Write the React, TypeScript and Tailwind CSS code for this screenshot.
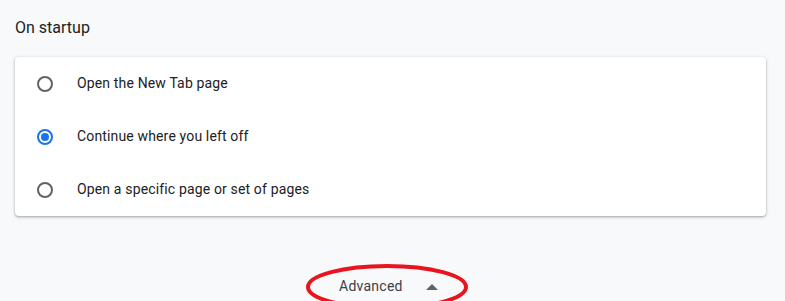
import { useState } from "react";

const options = [
    "Open the New Tab page",
    "Continue where you left off",
    "Open a specific page or set of pages",
]

function Radio(props: { checked: boolean }) {
    if (props.checked) {
        return <div className="w-4 h-4 rounded-full border-2 border-[#1a73e8] flex items-center justify-center">
            <div className="w-2 h-2 rounded-full bg-[#1a73e8]"></div>
        </div>
    }
    return <div className="w-4 h-4 rounded-full border-2 border-[#5f6368]"></div>
}

export default function App() {
    const [selected, setSelected] = useState(1)

    return <div className="w-[785px] h-[301px] overflow-hidden bg-[#f8f9fa] font-['Roboto',sans-serif] relative">
        <div className="px-[15px] pt-[17px]">
            <p className="text-[16px] leading-[22px] text-[#202124] mb-[18px]">On startup</p>
            <div className="w-[751px] bg-white rounded-[4px] shadow-[0_1px_2px_0_rgba(60,64,67,0.3),0_1px_3px_1px_rgba(60,64,67,0.15)]">
                {options.map((v, i) =>
                    <div key={i} onClick={() => setSelected(i)} className="h-[53px] flex items-center pl-[22px] cursor-pointer">
                        <Radio checked={selected == i} />
                        <span className="ml-[24px] text-[14px] tracking-[0.15px] text-[#202124]">{v}</span>
                    </div>
                )}
            </div>
        </div>
        <div className="flex mt-[60px] pl-[339px]">
            <div className="flex items-center gap-[23px] text-[14px] tracking-[0.25px] text-[#3c4043]">
                <span>Advanced</span>
                <svg width="12" height="6" viewBox="0 0 10 5"><path d="M0 5 L5 0 L10 5 Z" fill="#5f6368" /></svg>
            </div>
        </div>
        {/* red annotation ring */}
        <svg className="absolute left-0 top-0 pointer-events-none" width="785" height="301">
            <ellipse cx="387" cy="287" rx="79" ry="21" fill="none" stroke="#e8151f" strokeWidth="4" />
        </svg>
    </div>
}
